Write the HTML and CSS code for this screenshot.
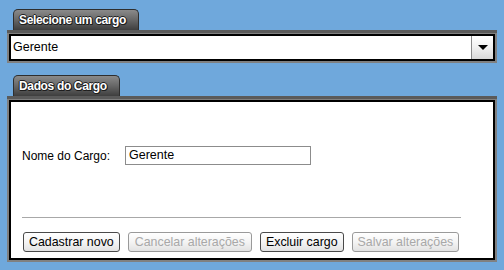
FILE: index.html
```html
<!DOCTYPE html>
<html lang="pt-BR">
<head>
    <meta charset="UTF-8">
    <title>Cargos</title>
    <link rel="stylesheet" href="styles.css">
</head>
<body>
    <div class="section">
        <div class="tab tab-select">Selecione um cargo</div>
        <div class="panel">
            <div class="combo">
                <span class="combo-value">Gerente</span>
                <span class="combo-button"><span class="arrow"></span></span>
            </div>
        </div>
    </div>

    <div class="section section-details">
        <div class="tab tab-details">Dados do Cargo</div>
        <div class="panel">
            <div class="details">
                <div class="field">
                    <label class="field-label">Nome do Cargo:</label>
                    <div class="field-input">Gerente</div>
                </div>
                <div class="divider"></div>
                <div class="actions">
                    <button class="btn btn-new">Cadastrar novo</button>
                    <button class="btn btn-cancel" disabled>Cancelar alterações</button>
                    <button class="btn btn-delete">Excluir cargo</button>
                    <button class="btn btn-save" disabled>Salvar alterações</button>
                </div>
            </div>
        </div>
    </div>
</body>
</html>
```

FILE: styles.css
```css
* {
    margin: 0;
    padding: 0;
    box-sizing: border-box;
}

body {
    font-family: "Liberation Sans", Arial, sans-serif;
    font-size: 12px;
    color: #000;
    background: #6fa8dc;
    padding: 9px 7px 0 7px;
    width: 504px;
    height: 270px;
    overflow: hidden;
}

.section-details {
    margin-top: 12px;
}

.tab {
    margin-left: 6px;
    height: 21px;
    border: 1px solid #2e2e2e;
    border-bottom: none;
    border-radius: 5px 5px 0 0;
    background: linear-gradient(to bottom, #8a8a8a 0%, #6a6a6a 45%, #3e3e3e 100%);
    color: #fff;
    font-weight: bold;
    font-size: 12px;
    letter-spacing: -0.35px;
    line-height: 20px;
    padding-left: 5px;
    text-shadow: 1px 1px 0 #1e1e1e, -1px 0 0 #1e1e1e, 0 -1px 0 #1e1e1e, 1px 0 0 #1e1e1e, 0 1px 0 #1e1e1e;
}

.tab-select {
    width: 126px;
}

.tab-details {
    width: 107px;
}

.panel {
    background: #808080;
    border-top: 3px solid #5a5a5a;
    padding: 1px 2px 2px 2px;
}

.combo {
    display: flex;
    height: 27px;
    border: 2px solid #000;
    background: #fff;
}

.combo-value {
    flex: 1;
    padding-left: 2px;
    line-height: 23px;
    font-size: 12.5px;
}

.combo-button {
    width: 22px;
    border-left: 1px solid #8a8a8a;
    background: linear-gradient(to bottom, #ffffff 0%, #f0f0f0 50%, #d8d8d8 100%);
    display: flex;
    align-items: center;
    justify-content: center;
}

.arrow {
    width: 0;
    height: 0;
    border-left: 5px solid transparent;
    border-right: 5px solid transparent;
    border-top: 5px solid #000;
}

.details {
    height: 160px;
    background: #fff;
    border: 2px solid #000;
    padding: 0 32px 0 11px;
}

.field {
    display: flex;
    align-items: center;
    margin-top: 44px;
}

.field-label {
    width: 103px;
}

.field-input {
    width: 186px;
    height: 19px;
    border: 1px solid #8c8c8c;
    padding-left: 3px;
    line-height: 17px;
    font-size: 12.5px;
}

.divider {
    margin-top: 52px;
    border-top: 1px solid #a8a8a8;
}

.actions {
    display: flex;
    gap: 8px;
    margin-top: 14px;
    padding-left: 1px;
}

.btn {
    height: 20px;
    padding: 0 5px;
    font-family: "Liberation Sans", Arial, sans-serif;
    font-size: 12.4px;
    color: #000;
    border: 1px solid #4a4a4a;
    border-radius: 3px;
    background: linear-gradient(to bottom, #ffffff 0%, #f4f4f4 50%, #e2e2e2 100%);
}

.btn-cancel {
    padding: 0 6px;
}

.btn:disabled {
    color: #a8a8a8;
    border-color: #9a9a9a;
}
```
